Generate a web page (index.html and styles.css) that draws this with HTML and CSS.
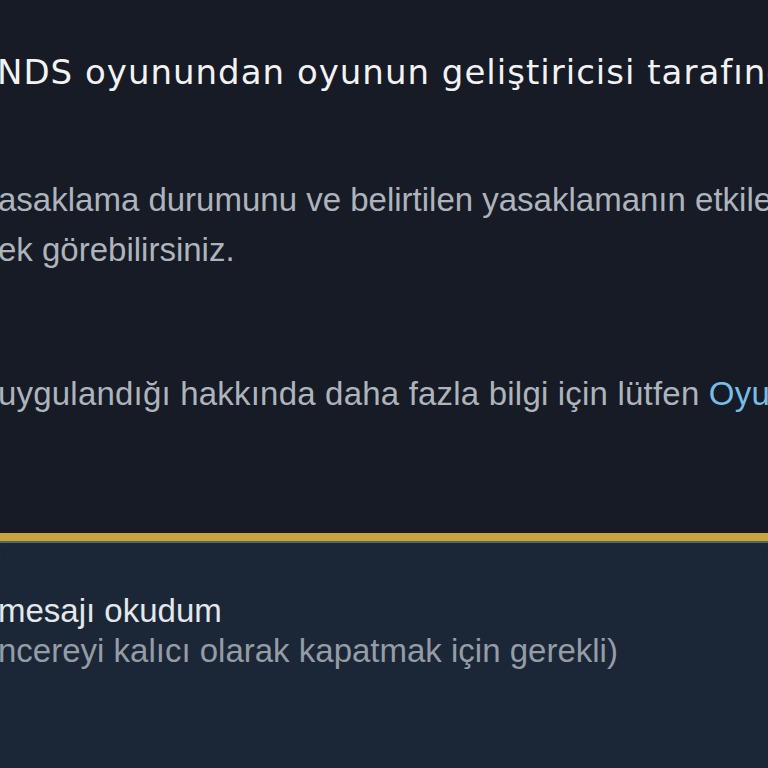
FILE: index.html
```html
<html>
    <head>
        <title>Oyun yasaklama bildirimi</title>
        <link rel="stylesheet" href="styles.css">
    </head>
    <body>
        <div class="banSection">
            <h1 class="banTitle">NDS oyunundan oyunun geliştiricisi tarafından yasaklandınız</h1>
            <p class="banText">asaklama durumunu ve belirtilen yasaklamanın etkilediği hesapları<br>ek görebilirsiniz.</p>
            <p class="banText moreInfo">uygulandığı hakkında daha fazla bilgi için lütfen <a href="#">Oyun geliştiricisi ile iletişime geçin</a></p>
        </div>

        <div class="ackSection">
            <label class="ackLabel">
                <span class="ackMain">mesajı okudum</span><br>
                <span class="ackSub">ncereyi kalıcı olarak kapatmak için gerekli)</span>
            </label>
        </div>
    </body>
</html>
```

FILE: styles.css
```css
html, body {
    margin: 0;
    height: 100%;
    overflow: hidden;
    background-color: #161b26;
    font-family: "Liberation Sans", Arial, sans-serif;
}

.banSection {
    height: 541px;
    box-sizing: border-box;
    padding-top: 52px;
    white-space: nowrap;
    overflow: hidden;
    border-bottom: 8px solid #c9a43c;
}

.banTitle {
    margin: 0 0 0 -3px;
    font-family: "DejaVu Sans", Verdana, sans-serif;
    font-size: 34px;
    letter-spacing: 1px;
    line-height: 40px;
    font-weight: normal;
    color: #f2f2f2;
}

.banText {
    margin: 83px 0 0 -2px;
    font-size: 33px;
    line-height: 50px;
    color: #aeb4bb;
}

.moreInfo {
    margin-top: 94px;
    letter-spacing: 0.2px;
}

.moreInfo a {
    color: #78bde6;
    text-decoration: none;
}

.ackSection {
    height: 227px;
    box-sizing: border-box;
    background-color: #1b2737;
    padding-top: 48px;
    white-space: nowrap;
    overflow: hidden;
    border-top: 2px solid #4f6a62;
    box-shadow: inset 0 6px 8px -4px #232640;
}

.ackLabel {
    display: block;
    margin-left: -2px;
    font-size: 33px;
    line-height: 40px;
}

.ackMain {
    color: #e4e8ec;
}

.ackSub {
    color: #959ca5;
}
```
